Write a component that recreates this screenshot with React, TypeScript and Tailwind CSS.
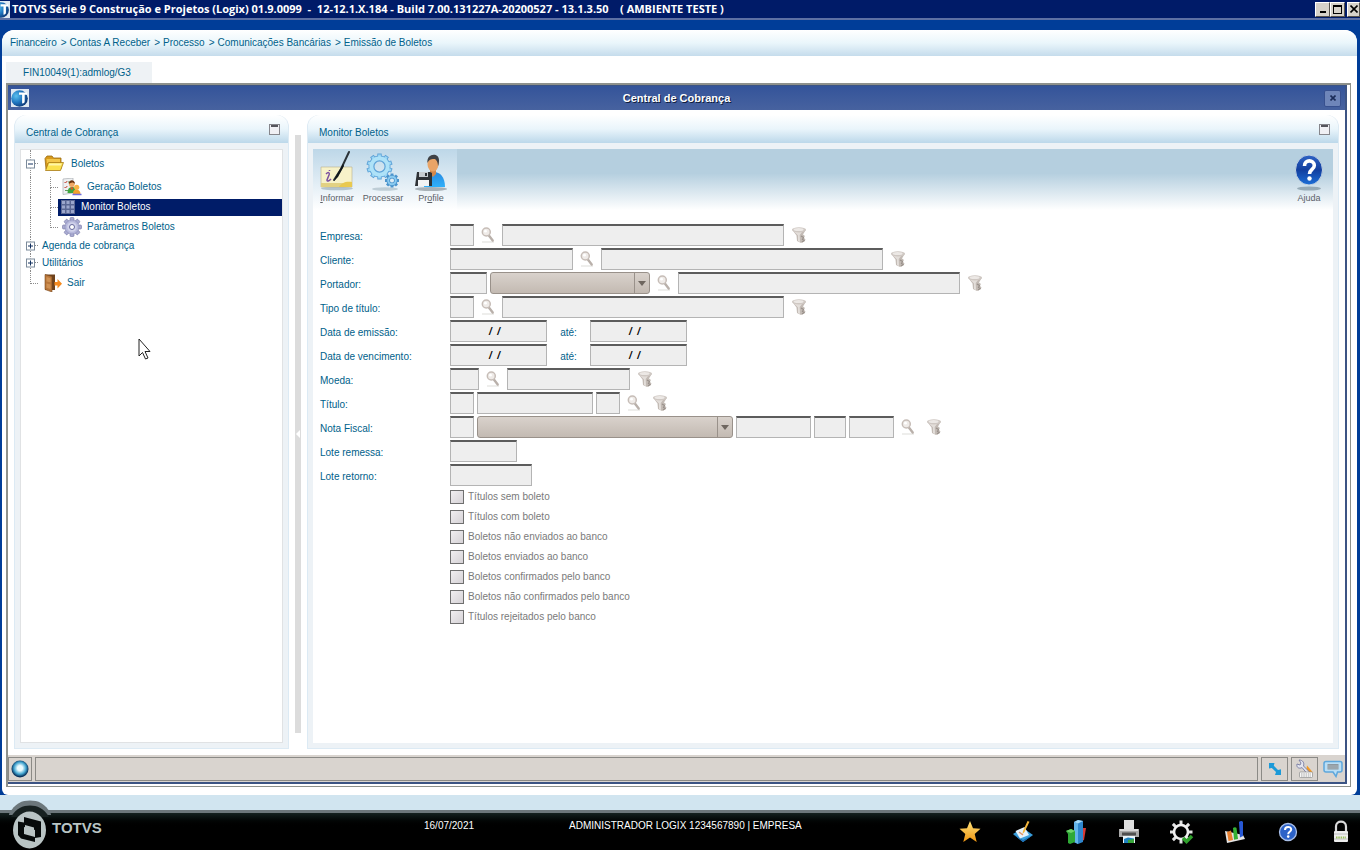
import type { ReactNode } from "react";

/* ---------- Icons ---------- */

const TotvsBall = ({ className }: { className?: string }) => (
  <svg viewBox="0 0 18 18" preserveAspectRatio="xMaxYMid slice" className={className}>
    <defs>
      <radialGradient id="ball" cx="0.3" cy="0.35" r="0.8">
        <stop offset="0" stopColor="#5cc0ee" />
        <stop offset="0.5" stopColor="#1f76c0" />
        <stop offset="1" stopColor="#0a2a66" />
      </radialGradient>
    </defs>
    <rect width="18" height="18" fill="#dfe8f2" />
    <circle cx="8.5" cy="9.5" r="8.3" fill="url(#ball)" />
    <path d="M8 3.500h8v2.300h-2.300v6.500c0 1.600-.9 2.200-2.600 2.200V5.800H8z" fill="#fff" />
  </svg>
);

const SearchIcon = () => (
  <svg viewBox="0 0 14 16" className="h-4 w-3.5">
    <path d="M1 15h12" stroke="#e9e8e6" strokeWidth="1.500" />
    <path d="M7.500 8l4.200 5.500" stroke="#b9b0aa" strokeWidth="2.400" strokeLinecap="round" />
    <circle cx="5.300" cy="5" r="4" fill="#efebe8" stroke="#c6bdb7" strokeWidth="1.500" />
    <circle cx="4.500" cy="4.200" r="1.400" fill="#fff" />
  </svg>
);

const FunnelIcon = () => (
  <svg viewBox="0 0 16 18" className="h-[18px] w-4">
    <path d="M1 3.500L5.500 9.500l.5 5.500 4 2 3.500-1.500 1-2-1.700-1.800 1.200-1.700-2-1.500L15 3.500z" fill="#c3bbb5" />
    <path d="M2.500 5L7 9.500V15l2 1-.3-7L11 6z" fill="#e3deda" />
    <ellipse cx="8" cy="3.800" rx="7" ry="2.600" fill="#cfc8c3" />
    <ellipse cx="7.600" cy="3.600" rx="5" ry="1.500" fill="#ece8e5" />
    <path d="M10 10l2.500 1.500-1 2 1.500 1-2 1.500" stroke="#99918b" strokeWidth="1.200" fill="none" />
  </svg>
);

const FolderIcon = () => (
  <svg viewBox="0 0 20 17" className="h-[17px] w-5">
    <path d="M1 3.500L3 1h5l1.500 2H17v11H2z" fill="#d79a1c" stroke="#9a6c12" strokeWidth="0.8" />
    <path d="M2.500 4h13.500v4H3z" fill="#f3c649" />
    <path d="M4.500 7.500h15L16.500 15.500H1.500z" fill="#fbe14d" stroke="#a87a14" strokeWidth="0.8" />
    <path d="M5.200 8.500h12.600l-.8 2H4.500z" fill="#fff5a8" />
  </svg>
);

const PeopleIcon = () => (
  <svg viewBox="0 0 20 18" className="h-[18px] w-5">
    <path d="M1 1l10-1v15L1 16.500z" fill="#eef0f2" stroke="#a9adb2" strokeWidth="0.7" />
    <path d="M2.500 4l1 1 1.800-2M2.500 9l1 1 1.800-2" stroke="#c43c2c" strokeWidth="1" fill="none" />
    <path d="M6 4h4M6 12.500H3" stroke="#5f9c5f" strokeWidth="1" />
    <path d="M5.500 15c0-4 1.500-6 4.500-6s4 2 4 6z" fill="#3ca73c" />
    <path d="M8 9.500l2 3 1.500-3z" fill="#e84c2a" />
    <circle cx="9.800" cy="6" r="2.900" fill="#f0a865" />
    <path d="M6.800 6c0-5 6-5 6.200 0-1.500-2-4-2-6.200 0z" fill="#6b3410" />
    <path d="M11 16c0-3.500 1.500-4.500 3.500-4.500s4 1.500 4 4.500z" fill="#f2a12c" />
    <circle cx="14.700" cy="9.300" r="2.600" fill="#f8b545" />
    <path d="M10.500 16.500h9" stroke="#6d6de0" strokeWidth="1.500" />
  </svg>
);

const GridIcon = () => (
  <svg viewBox="0 0 14 14" className="h-3.5 w-3.5">
    <rect width="14" height="14" fill="#5a6794" />
    <path
      d="M1 1h3v3H1zM5.500 1h3v3h-3zM10 1h3v3h-3zM1 5.500h3v3H1zM5.500 5.500h3v3h-3zM10 5.500h3v3h-3zM1 10h3v3H1zM5.500 10h3v3h-3zM10 10h3v3h-3z"
      fill="#9ba6cc"
    />
  </svg>
);

const TEETH = [0, 45, 90, 135, 180, 225, 270, 315];
const MANY_TEETH = [0, 36, 72, 108, 144, 180, 216, 252, 288, 324];

const GearIcon = () => (
  <svg viewBox="0 0 20 20" className="h-5 w-5">
    {TEETH.map((a) => (
      <rect key={a} x="8" y="0.500" width="4" height="5" rx="1" fill="#a9abd0" stroke="#7375a6" strokeWidth="0.6" transform={`rotate(${a} 10 10)`} />
    ))}
    <circle cx="10" cy="10" r="7" fill="#b7b9dc" stroke="#8587b4" strokeWidth="0.5" />
    <circle cx="10" cy="10" r="4.800" fill="#d0d2ea" />
    <circle cx="10" cy="10" r="2.500" fill="#fff" stroke="#66689c" strokeWidth="1" />
  </svg>
);

const DoorIcon = () => (
  <svg viewBox="0 0 18 18" className="h-[18px] w-[18px]">
    <path d="M1 .5h10V16H1z" fill="#6e421d" />
    <path d="M1 .5l7 2V18l-7-2.500z" fill="#b8763a" stroke="#7a4a20" strokeWidth="0.6" />
    <path d="M2.500 3l4 1.200v4L2.500 7.500zM2.500 9.500l4 1v4.500l-4-1.200z" fill="#cf9153" />
    <path d="M10.500 8h3V5l4.500 4.800-4.500 4.700v-3h-3z" fill="#f58a1f" />
  </svg>
);

const InformIcon = () => (
  <svg viewBox="0 0 36 42" className="h-[42px] w-9">
    <ellipse cx="18" cy="38.500" rx="16" ry="1.800" fill="#7f98a6" opacity="0.5" />
    <path d="M2 17h31v20H2z" fill="#f7f2c9" stroke="#b8b08a" strokeWidth="0.6" />
    <path d="M2 33h31v4H2z" fill="#e2d183" />
    <path d="M20 37c2-4 7-6 13-5v5z" fill="#e9c94f" />
    <path d="M7 24c2-2 4-2 3 1l-2 5c0 2 2 1 4-1M10.500 20v1" stroke="#7a4fa0" strokeWidth="1.500" fill="none" />
    <path d="M30 2L22 19l-7 11" stroke="#2b3338" strokeWidth="2" fill="none" strokeLinecap="round" />
    <path d="M24 14l-7 12-2 5 4-4 6-11z" fill="#11181c" />
  </svg>
);

const ProcessIcon = () => (
  <svg viewBox="0 0 34 40" className="h-10 w-[34px]">
    <ellipse cx="19" cy="37" rx="13" ry="1.800" fill="#7f98a6" opacity="0.4" />
    <g fill="none">
      {MANY_TEETH.map((a) => (
        <path key={a} d="M13.500 1.500v6" stroke="#5ea3d8" strokeWidth="4.400" transform={`rotate(${a} 13.500 14.500)`} />
      ))}
      <circle cx="13.500" cy="14.500" r="8" stroke="#5ea3d8" strokeWidth="6" />
      {MANY_TEETH.map((a) => (
        <path key={a} d="M13.500 2.500v5" stroke="#9bd6f4" strokeWidth="2.800" transform={`rotate(${a} 13.500 14.500)`} />
      ))}
      <circle cx="13.500" cy="14.500" r="8.200" stroke="#aee2f8" strokeWidth="4" />
      {TEETH.map((a) => (
        <path key={a} d="M26 21.500v4" stroke="#4c94cc" strokeWidth="3" transform={`rotate(${a} 26 28.500)`} />
      ))}
      <circle cx="26" cy="28.500" r="3.800" stroke="#4c94cc" strokeWidth="3.500" />
      <circle cx="26" cy="28.500" r="3.800" stroke="#8bcbf0" strokeWidth="2" />
    </g>
  </svg>
);

const ProfileIcon = () => (
  <svg viewBox="0 0 34 40" className="h-10 w-[34px]">
    <defs>
      <linearGradient id="shirt" x1="0" y1="0" x2="0" y2="1">
        <stop offset="0" stopColor="#2a8ae0" />
        <stop offset="1" stopColor="#2fb0fa" />
      </linearGradient>
    </defs>
    <ellipse cx="17" cy="37" rx="16" ry="2" fill="#7b858c" opacity="0.6" />
    <path d="M10 35c0-10 4-15 10-15s11 5 11 15z" fill="url(#shirt)" />
    <path d="M16 17h6v5l-3 3-3-3z" fill="#d3884c" />
    <ellipse cx="19" cy="12" rx="5.500" ry="7.500" fill="#e9a467" />
    <path d="M13.500 11C12 1 25 0 25 8c0 5-1 6-1 6s0-5-3-7c-3 0-6 0-7.500 4z" fill="#3f4145" />
    <path d="M3 20h13l2 1v13H1z" fill="#2e3236" />
    <path d="M5 20h9v5H5z" fill="#c7ccd0" />
    <path d="M4 28h11v6H4z" fill="#f1f3f4" />
    <path d="M11 21h2v3h-2z" fill="#2e3236" />
  </svg>
);

const HelpIcon = () => (
  <svg viewBox="0 0 30 38" className="h-[38px] w-[30px]">
    <defs>
      <linearGradient id="help" x1="0" y1="0" x2="0" y2="1">
        <stop offset="0" stopColor="#2f63c4" />
        <stop offset="0.5" stopColor="#123f9f" />
        <stop offset="1" stopColor="#1c6fd8" />
      </linearGradient>
    </defs>
    <ellipse cx="15" cy="34.500" rx="12" ry="2" fill="#6e8592" opacity="0.6" />
    <ellipse cx="15" cy="16" rx="13.500" ry="15" fill="url(#help)" stroke="#c3d3e2" strokeWidth="1" />
    <path d="M10.500 12c0-7 9.800-6.500 9.800-.5 0 4-4.800 4-4.800 8.500" stroke="#fff" strokeWidth="3.600" fill="none" />
    <circle cx="15.500" cy="24.500" r="2.200" fill="#fff" />
  </svg>
);

const StatusOrb = () => (
  <svg viewBox="0 0 18 18" className="h-[18px] w-[18px]">
    <defs>
      <radialGradient id="orb" cx="0.5" cy="0.45" r="0.5">
        <stop offset="0.3" stopColor="#e9fbff" />
        <stop offset="0.7" stopColor="#42a5d0" />
        <stop offset="1" stopColor="#08325c" />
      </radialGradient>
    </defs>
    <circle cx="9" cy="9" r="8.500" fill="url(#orb)" />
  </svg>
);

const ResizeIcon = () => (
  <svg viewBox="0 0 14 14" className="h-3.5 w-3.5">
    <path d="M1 1h5.500L5.800 3.800 10 8l3-.8V13H7l1-3L3.800 6 1 6.500z" fill="#1c9ad8" />
  </svg>
);

const ToolsIcon = () => (
  <svg viewBox="0 0 20 20" className="h-5 w-5">
    <path d="M12 6.500l6 7h-7z" fill="#f39a23" />
    <path d="M4 1l2 3-1 2-3-1C1 9 5 10 7 8.500l5 6 2-2-5.500-5.500C9.500 4 8 1 4 1z" fill="#e3e5ef" stroke="#7579a0" strokeWidth="0.9" />
    <rect x="4.500" y="13" width="13" height="5.500" rx="1" fill="#f8f8f8" stroke="#8e8e8e" strokeWidth="0.7" />
    <path d="M6 15h10M6 17h10" stroke="#a5a5a5" strokeDasharray="1.500 0.8" />
  </svg>
);

const ChatIcon = () => (
  <svg viewBox="0 0 20 18" className="h-[18px] w-5">
    <path d="M3 1.500h14c1 0 2 .8 2 2v6.500c0 1.200-1 2-2 2h-2.500L13 16.500 10 12H3c-1 0-2-.8-2-2V3.500c0-1.200 1-2 2-2z" fill="#b9def5" stroke="#5da7dc" strokeWidth="1.500" />
    <path d="M4.500 4h11v5.500h-11z" fill="#8d989f" />
    <path d="M4.500 6h11M4.500 8h11" stroke="#b9c2c8" strokeWidth="0.7" />
  </svg>
);

const StarIcon = () => (
  <svg viewBox="0 0 22 24" className="h-6 w-[22px]">
    <defs>
      <linearGradient id="star" x1="0" y1="0" x2="0" y2="1">
        <stop offset="0" stopColor="#ffe27a" />
        <stop offset="1" stopColor="#ee9410" />
      </linearGradient>
    </defs>
    <path d="M11 1l3 7.300 7.500.5-5.800 5.200 2 8L11 17.600 4.300 22l2-8L.5 8.800l7.500-.5z" fill="url(#star)" />
  </svg>
);

const NoteIcon = () => (
  <svg viewBox="0 0 22 24" className="h-6 w-[22px]">
    <path d="M1 14l10-6 10 7-10 7z" fill="#3a9fdc" />
    <path d="M1 14l10 6 10-5-10 7z" fill="#1c6fb4" />
    <path d="M3.500 11l9-4 4.500 8-9 3.500z" fill="#e6f2fb" />
    <path d="M7 12l4 3" stroke="#e0926a" strokeWidth="1.500" />
    <path d="M15.500 1l2 .8L12.500 12l-2 2 .5-3z" fill="#f3b53c" />
  </svg>
);

const BuildingsIcon = () => (
  <svg viewBox="0 0 22 26" className="h-[26px] w-[22px]">
    <path d="M15 9l6 0-2 12-4 2z" fill="#d83a34" />
    <path d="M9 3l4-2 5 1v21l-5 2-4-2z" fill="#2f86cc" />
    <path d="M9 3l4 1.500V25l-4-2z" fill="#63b4ea" />
    <path d="M9 3l4-2 5 1-5 2.500z" fill="#a6daf8" />
    <path d="M1 12l5-2 4 2v11l-5 2-2-1v-9z" fill="#2fa836" />
    <path d="M1 12l5-2 4 2-4 2z" fill="#6fd36a" />
  </svg>
);

const PrinterIcon = () => (
  <svg viewBox="0 0 22 24" className="h-6 w-[22px]">
    <path d="M6 0h10v9H6z" fill="#dedede" />
    <path d="M1 9h20v8H1z" fill="#a8a8a8" />
    <path d="M2 9h18v2H2z" fill="#d8d8d8" />
    <path d="M4 12.500h14v3H4z" fill="#4f4f4f" />
    <path d="M5 16h12v7H5z" fill="#eaf4fa" />
    <path d="M6 19l4-1.500 6 1V23H6z" fill="#1f82c0" />
    <path d="M10 20l6-1v4h-6z" fill="#3aa63c" />
  </svg>
);

const GearCheckIcon = () => (
  <svg viewBox="0 0 24 24" className="h-6 w-6">
    {TEETH.map((a) => (
      <path key={a} d="M11 0.500v5" stroke="#e4e4e4" strokeWidth="3" transform={`rotate(${a} 11 12)`} />
    ))}
    <circle cx="11" cy="12" r="7" fill="#000" stroke="#f1f1f1" strokeWidth="2.600" />
    <path d="M13 18l3.500 3.500L22 16" stroke="#2fa02c" strokeWidth="3.500" fill="none" />
  </svg>
);

const ChartIcon = () => (
  <svg viewBox="0 0 22 24" className="h-6 w-[22px]">
    <path d="M1 11l2 12 18-4-2-4z" fill="#e6e6e6" />
    <path d="M3 12l4-1.500 2 9.500-4.500 1z" fill="#e88030" />
    <path d="M9 8c1-1 3-1 3.500 0l1.500 11-4 .8z" fill="#34b133" />
    <path d="M15 2c1-1.500 3.500-1.500 4 0v14l-3 1.500z" fill="#2858d4" />
  </svg>
);

const SmallHelpIcon = () => (
  <svg viewBox="0 0 20 20" className="h-5 w-5">
    <circle cx="10" cy="10" r="8.500" fill="#2c62c8" stroke="#a9bfe8" strokeWidth="1.300" />
    <path d="M7 8c0-4 6.200-4 6.200-.5 0 2.300-3 2.300-3 4.700" stroke="#fff" strokeWidth="2" fill="none" />
    <circle cx="10.200" cy="14.600" r="1.300" fill="#fff" />
  </svg>
);

const LockIcon = () => (
  <svg viewBox="0 0 18 24" className="h-6 w-[18px]">
    <path d="M4 12V6.500C4 0 14 0 14 6.500V12" stroke="#d9d9d9" strokeWidth="2.200" fill="none" />
    <rect x="2" y="11" width="14" height="11" rx="1" fill="#ededed" />
    <path d="M2 14h14M2 19h14" stroke="#bcbcbc" />
    <path d="M4 17.500h10" stroke="#9bc05c" strokeWidth="2" strokeDasharray="1.500 0.8" />
  </svg>
);

const TotvsMark = () => (
  <svg viewBox="0 0 42 52" className="h-[52px] w-[42px]">
    <path d="M0 14C6 3 13 0.500 21 0.500s15 2.500 21 13.500v1H0z" fill="#6c777b" />
    <path d="M2 17C7 8 14 5.500 21 5.500s14 2.500 19 11.500z" fill="#172120" />
    <ellipse cx="20.500" cy="30" rx="16.500" ry="18.500" fill="#b9c4c4" />
    <path d="M15 17l17 4.500v15.500l-6 1V30l-11-3z" fill="#060a0a" />
    <path d="M9 21.500l6 1V34l11 3v5L12 38.500 9 35z" fill="#060a0a" />
    <path d="M16 25l9 2.500v8L16 33z" fill="#b9c4c4" />
  </svg>
);

/* ---------- Tree ---------- */

const Branch = ({ last, children }: { last?: boolean; children?: ReactNode }) => (
  <span className="relative flex w-2 shrink-0 flex-col self-stretch">
    <span className="flex-1 border-b border-l border-dotted border-[#8c8c8c]" />
    <span className={last ? "flex-1" : "flex-1 border-l border-dotted border-[#8c8c8c]"} />
    {children}
  </span>
);

const Expander = ({ open, name }: { open?: boolean; name: string }) => (
  <button
    aria-label={`${open ? "Recolher" : "Expandir"} ${name}`}
    className="absolute top-1/2 -left-1 h-[9px] w-[9px] -translate-y-1/2 border border-[#7b8a9a] bg-white"
  >
    <svg viewBox="0 0 7 7" className="h-[7px] w-[7px]">
      <path d={open ? "M1 3.500h5" : "M1 3.500h5M3.500 1v5"} stroke="#12305f" />
    </svg>
  </button>
);

const SubItem = ({ icon, label, last, selected }: { icon: ReactNode; label: string; last?: boolean; selected?: boolean }) => (
  <li className="flex h-5 items-center">
    <span className="w-5 shrink-0 self-stretch border-l border-dotted border-[#8c8c8c]" />
    <Branch last={last} />
    {selected ? (
      <a href="#monitor" className="flex h-[17px] flex-1 items-center gap-1.5 bg-[#001c68] pl-[3px] text-white">
        {icon}
        {label}
      </a>
    ) : (
      <a href="#item" className="flex items-center gap-[5px] pl-1">
        {icon}
        {label}
      </a>
    )}
  </li>
);

const MenuTree = () => (
  <ul className="pl-[9px]">
    <li>
      <div className="flex h-[27px] items-center">
        <Branch>
          <Expander open name="Boletos" />
        </Branch>
        <a href="#boletos" className="flex items-center gap-[7px] pl-1.5">
          <FolderIcon />
          Boletos
        </a>
      </div>
      <ul>
        <SubItem icon={<PeopleIcon />} label="Geração Boletos" />
        <SubItem icon={<GridIcon />} label="Monitor Boletos" selected />
        <SubItem icon={<GearIcon />} label="Parâmetros Boletos" last />
      </ul>
    </li>
    <li className="flex h-[17px] items-center">
      <Branch>
        <Expander name="Agenda de cobrança" />
      </Branch>
      <a href="#agenda" className="pl-1">Agenda de cobrança</a>
    </li>
    <li className="flex h-[17px] items-center">
      <Branch>
        <Expander name="Utilitários" />
      </Branch>
      <a href="#utilitarios" className="pl-1">Utilitários</a>
    </li>
    <li className="flex h-6 items-center">
      <Branch last />
      <a href="#sair" className="flex items-center gap-[5px] pl-1.5">
        <DoorIcon />
        Sair
      </a>
    </li>
  </ul>
);

/* ---------- Form ---------- */

const Field = ({ id, name, className, value }: { id?: string; name: string; className: string; value?: string }) => (
  <input
    id={id}
    aria-label={id ? undefined : name}
    disabled
    defaultValue={value}
    className={`h-[22px] shrink-0 border border-t-2 border-[#b4b4b4] border-t-[#5c5c5c] bg-[#eeeeee] pr-2 text-center font-bold text-black italic ${className}`}
  />
);

const Combo = ({ name, className }: { name: string; className: string }) => (
  <span className={`relative flex h-[22px] shrink-0 ${className}`}>
    <select
      aria-label={name}
      disabled
      className="w-full appearance-none rounded-[3px] border border-[#99918a] bg-linear-to-b from-[#d9d2cc] to-[#c3bab2] opacity-100"
    />
    <span className="pointer-events-none absolute inset-y-px right-px flex w-[15px] items-center justify-center border-l border-[#99918a]">
      <svg viewBox="0 0 8 5" className="h-[5px] w-2">
        <path d="M0 0h8L4 5z" fill="#6e665f" />
      </svg>
    </span>
  </span>
);

const Search = () => (
  <button aria-label="Pesquisar" disabled className="flex w-[22px] shrink-0 justify-center">
    <SearchIcon />
  </button>
);

const Filter = () => (
  <button aria-label="Filtrar" disabled className="flex w-[23px] shrink-0 justify-center">
    <FunnelIcon />
  </button>
);

const Row = ({ id, label, children }: { id: string; label: string; children: ReactNode }) => (
  <div className="flex h-6 items-center">
    <label htmlFor={id} className="w-[130px] shrink-0 pt-1">
      {label}
    </label>
    <div className="flex items-center gap-[3px]">{children}</div>
  </div>
);

const OPTIONS = [
  "Títulos sem boleto",
  "Títulos com boleto",
  "Boletos não enviados ao banco",
  "Boletos enviados ao banco",
  "Boletos confirmados pelo banco",
  "Boletos não confirmados pelo banco",
  "Títulos rejeitados pelo banco",
];

const FilterForm = () => (
  <form className="px-[7px] pt-[13px]">
    <Row id="empresa" label="Empresa:">
      <Field id="empresa" name="Empresa" className="w-6" />
      <Search />
      <Field name="Nome da empresa" className="w-[282px]" />
      <Filter />
    </Row>
    <Row id="cliente" label="Cliente:">
      <Field id="cliente" name="Cliente" className="w-[123px]" />
      <Search />
      <Field name="Nome do cliente" className="w-[282px]" />
      <Filter />
    </Row>
    <Row id="portador" label="Portador:">
      <Field id="portador" name="Portador" className="w-[37px]" />
      <Combo name="Tipo de portador" className="w-40" />
      <Search />
      <Field name="Nome do portador" className="w-[282px]" />
      <Filter />
    </Row>
    <Row id="tipo" label="Tipo de título:">
      <Field id="tipo" name="Tipo" className="w-6" />
      <Search />
      <Field name="Descrição do tipo" className="w-[282px]" />
      <Filter />
    </Row>
    <Row id="emissao" label="Data de emissão:">
      <Field id="emissao" name="Data de emissão" className="w-[97px]" value="/  /" />
      <label htmlFor="emissao-ate" className="w-[37px] pt-1 text-center">até:</label>
      <Field id="emissao-ate" name="Até" className="w-[97px]" value="/  /" />
    </Row>
    <Row id="vencimento" label="Data de vencimento:">
      <Field id="vencimento" name="Data de vencimento" className="w-[97px]" value="/  /" />
      <label htmlFor="vencimento-ate" className="w-[37px] pt-1 text-center">até:</label>
      <Field id="vencimento-ate" name="Até" className="w-[97px]" value="/  /" />
    </Row>
    <Row id="moeda" label="Moeda:">
      <Field id="moeda" name="Moeda" className="w-[29px]" />
      <Search />
      <Field name="Nome da moeda" className="w-[123px]" />
      <Filter />
    </Row>
    <Row id="titulo" label="Título:">
      <Field id="titulo" name="Título" className="w-6" />
      <Field name="Número do título" className="w-[116px]" />
      <Field name="Parcela" className="w-6" />
      <Search />
      <Filter />
    </Row>
    <Row id="nota" label="Nota Fiscal:">
      <Field id="nota" name="Nota Fiscal" className="w-6" />
      <Combo name="Tipo de nota" className="w-64" />
      <Field name="Número da nota" className="w-[75px]" />
      <Field name="Série" className="w-8" />
      <Field name="Subsérie" className="w-[45px]" />
      <Search />
      <Filter />
    </Row>
    <Row id="remessa" label="Lote remessa:">
      <Field id="remessa" name="Lote remessa" className="w-[67px]" />
    </Row>
    <Row id="retorno" label="Lote retorno:">
      <Field id="retorno" name="Lote retorno" className="w-[82px]" />
    </Row>
    <div className="pl-[130px]">
      {OPTIONS.map((option) => (
        <label key={option} className="flex h-5 items-center gap-1 text-[#7a7a7a]">
          <input
            type="checkbox"
            disabled
            className="h-3.5 w-3.5 appearance-none border border-[#6f6f6f] bg-linear-to-br from-[#f0eef0] to-[#d6d2d6]"
          />
          {option}
        </label>
      ))}
    </div>
  </form>
);

/* ---------- Panels ---------- */

const Panel = ({ title, className, children }: { title: string; className: string; children: ReactNode }) => (
  <section className={`flex flex-col rounded-t-xl border border-t-0 border-[#dceaf4] bg-[#edf2f6] ${className}`}>
    <header className="flex h-7 items-center justify-between rounded-t-xl bg-linear-to-b from-white via-[#eaf5fb] to-[#bcd8ea] pr-2 pl-[11px]">
      <h2 className="pt-2">{title}</h2>
      <button aria-label={`Minimizar ${title}`} className="flex h-[11px] w-[11px] items-start justify-center border border-[#86868c] bg-[#f0f0f4]">
        <span className="h-0.5 w-[7px] bg-[#55555c]" />
      </button>
    </header>
    {children}
  </section>
);

const Tool = ({ icon, label, keyAt, className }: { icon: ReactNode; label: string; keyAt?: number; className: string }) => (
  <button className={`flex h-full flex-col items-center justify-end pb-1.5 text-[9px] leading-3 text-[#5a6068] ${className}`}>
    {icon}
    <span>
      {keyAt === undefined ? (
        label
      ) : (
        <>
          {label.slice(0, keyAt)}
          <u>{label[keyAt]}</u>
          {label.slice(keyAt + 1)}
        </>
      )}
    </span>
  </button>
);

const CRUMBS = ["Financeiro", "Contas A Receber", "Processo", "Comunicações Bancárias", "Emissão de Boletos"];

const SHORTCUTS = [
  { name: "Favoritos", icon: <StarIcon /> },
  { name: "Anotações", icon: <NoteIcon /> },
  { name: "Empresas", icon: <BuildingsIcon /> },
  { name: "Imprimir", icon: <PrinterIcon /> },
  { name: "Processos", icon: <GearCheckIcon /> },
  { name: "Indicadores", icon: <ChartIcon /> },
  { name: "Ajuda", icon: <SmallHelpIcon /> },
  { name: "Bloquear", icon: <LockIcon /> },
];

const winButton = "flex h-[15px] items-center justify-center border border-white border-r-[#55524c] border-b-[#55524c] bg-[#d6d2ca]";

export default function App() {
  return (
    <div className="relative flex min-h-screen flex-col overflow-hidden bg-[#d1e5f0] font-['Liberation_Sans',Arial,sans-serif] text-[10px] leading-4 text-[#00618a]">
      {/* Title bar */}
      <header className="flex h-5 items-center border-b-2 border-[#5d70a4] bg-[#001b68]">
        <TotvsBall className="mr-0.5 h-[17px] w-2.5" />
        <h1 className="font-['Open_Sans','Noto_Sans',sans-serif] text-[11px] font-bold whitespace-pre text-white">
          TOTVS Série 9 Construção e Projetos (Logix) 01.9.0099{"  -  "}12-12.1.X.184 - Build 7.00.131227A-20200527 - 13.1.3.50{"    "}( AMBIENTE TESTE )
        </h1>
        <div className="ml-auto flex">
          <button aria-label="Minimizar" className={`w-[15px] ${winButton}`}>
            <span className="mt-1.5 h-0.5 w-1.5 bg-black" />
          </button>
          <button aria-label="Maximizar" className={`mr-0.5 w-[15px] ${winButton}`}>
            <span className="h-[9px] w-[9px] border border-t-2 border-black" />
          </button>
          <button aria-label="Fechar" className={`w-[13px] ${winButton}`}>
            <svg viewBox="0 0 8 8" className="h-2 w-2">
              <path d="M0.500 0.500l7 7M7.500 0.500l-7 7" stroke="#000" strokeWidth="1.600" />
            </svg>
          </button>
        </div>
      </header>

      <div className="flex flex-1 flex-col bg-[#003d98] pt-2.5 pr-[3px] pl-0.5">
        <main className="flex flex-1 flex-col rounded-t-xl rounded-b-md bg-white pb-2">
          <nav className="flex h-[26px] items-center gap-1 rounded-t-xl bg-linear-to-b from-white via-[#eaf6fb] to-[#c5dcec] pl-2">
            {CRUMBS.map((crumb, i) => (
              <span key={crumb} className="flex gap-[3px]">
                {i > 0 && <span>&gt;</span>}
                <a href="#crumb">{crumb}</a>
              </span>
            ))}
          </nav>

          <button className="mt-1.5 ml-1 h-[21px] w-[146px] bg-[#eef2f5] pr-1 text-center">FIN10049(1):admlog/G3</button>

          {/* Routine window */}
          <div className="mr-1.5 ml-1 flex flex-1 flex-col border-2 border-r border-b border-[#8e918c] pr-[3px] pb-0.5">
            <div className="flex flex-1 flex-col border-t border-r-2 border-b-2 border-[#3c5484]">
              <div className="flex h-6 items-center bg-linear-to-b from-[#34549a] to-[#47629f] pr-1 pl-[3px]">
                <TotvsBall className="h-[18px] w-[18px]" />
                <h2 className="flex-1 text-center text-[11px] font-bold text-white [text-shadow:1px_1px_0_#101c3c]">Central de Cobrança</h2>
                <button aria-label="Fechar janela" className="flex h-[17px] w-[17px] items-center justify-center rounded-xs border border-[#37508e] bg-[#6f86b9]">
                  <svg viewBox="0 0 6 6" className="h-1.5 w-1.5">
                    <path d="M0.500 0.500l5 5M5.500 0.500l-5 5" stroke="#1b2c58" strokeWidth="1.600" />
                  </svg>
                </button>
              </div>

              <div className="flex flex-1 items-stretch px-1.5 pt-[5px] pb-1.5">
                <Panel title="Central de Cobrança" className="w-[275px] shrink-0">
                  <div className="mx-[5px] mt-1.5 mb-[5px] flex-1 border border-[#e0e2e4] bg-white">
                    <MenuTree />
                  </div>
                </Panel>
                <div className="mx-1.5 mt-5 mb-4 flex w-1.5 items-center bg-[#dcdcdc]">
                  <svg viewBox="0 0 6 8" className="h-2 w-1.5">
                    <path d="M5 0v8L1 4z" fill="#fff" />
                  </svg>
                </div>
                <Panel title="Monitor Boletos" className="flex-1">
                  <div className="mx-[5px] mt-1.5 mb-[5px] flex-1 bg-white">
                    <div className="flex h-[61px] justify-between bg-linear-to-b from-[#b5cfdf] from-40% to-white">
                      <div className="flex bg-linear-to-b from-[#bdd7e8] to-white">
                        <Tool icon={<InformIcon />} label="Informar" keyAt={0} className="w-12" />
                        <Tool icon={<ProcessIcon />} label="Processar" className="w-11" />
                        <Tool icon={<ProfileIcon />} label="Profile" keyAt={2} className="w-[52px]" />
                      </div>
                      <Tool icon={<HelpIcon />} label="Ajuda" className="w-12" />
                    </div>
                    <FilterForm />
                  </div>
                </Panel>
              </div>

              {/* Status bar */}
              <div className="flex h-[27px] items-center gap-[3px] bg-[#d9d4cf]">
                <button aria-label="Status" className="flex h-6 w-6 items-center justify-center border border-[#8b8a86]">
                  <StatusOrb />
                </button>
                <div className="h-6 flex-1 border border-[#8b8a86]" />
                <button aria-label="Redimensionar" className="flex h-6 w-[27px] items-center justify-center border border-[#8b8a86]">
                  <ResizeIcon />
                </button>
                <button aria-label="Ferramentas" className="flex h-6 w-[27px] items-center justify-center border border-[#8b8a86]">
                  <ToolsIcon />
                </button>
                <button aria-label="Mensagens" className="flex w-6 justify-center">
                  <ChatIcon />
                </button>
              </div>
            </div>
          </div>
        </main>
      </div>

      {/* Footer */}
      <footer className="mt-[15px] flex h-10 items-center border-t-[3px] border-[#6c777b] bg-linear-to-b from-[#14211f] to-black to-40% text-white">
        <div className="relative flex w-[424px] items-center pb-2">
          <span className="absolute -top-5 left-[9px]">
            <TotvsMark />
          </span>
          <span className="pl-[52px] text-[15px] font-bold text-[#b9c4c4]">TOTVS</span>
        </div>
        <span className="pb-3">16/07/2021</span>
        <span className="ml-[95px] pb-3">ADMINISTRADOR LOGIX 1234567890 | EMPRESA</span>
        <nav className="ml-auto flex gap-[29px] pr-[7px]">
          {SHORTCUTS.map(({ name, icon }) => (
            <button key={name} aria-label={name} className="flex w-6 items-center justify-center">
              {icon}
            </button>
          ))}
        </nav>
      </footer>

      {/* Mouse pointer */}
      <svg viewBox="0 0 13 22" className="pointer-events-none absolute top-[338px] left-[138px] h-[22px] w-[13px]">
        <path d="M1 1v17l3.500-3.500L7.500 21l2.500-1-3-6.500H12z" fill="#fff" stroke="#222" />
      </svg>
    </div>
  );
}
